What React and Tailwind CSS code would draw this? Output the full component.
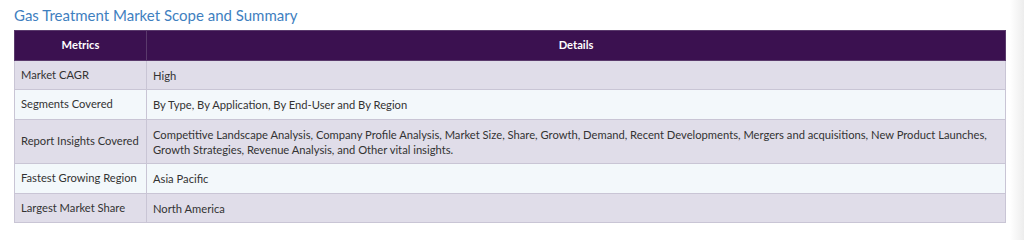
export default function App() {
  const rows = [
    ["Market CAGR", "High", "h-[29px]"],
    ["Segments Covered", "By Type, By Application, By End-User and By Region", "h-[30px]"],
    [
      "Report Insights Covered",
      "Competitive Landscape Analysis, Company Profile Analysis, Market Size, Share, Growth, Demand, Recent Developments, Mergers and acquisitions, New Product Launches, Growth Strategies, Revenue Analysis, and Other vital insights.",
      "h-[44px]",
    ],
    ["Fastest Growing Region", "Asia Pacific", "h-[30px]"],
    ["Largest Market Share", "North America", "h-[29px]"],
  ];
  return (
    <div className="w-[1024px] h-[240px] bg-white relative overflow-hidden" style={{ fontFamily: "Lato, 'Open Sans', sans-serif" }}>
      <div className="pl-[14px] pr-[18px] pt-[5px]">
        <h2 className="text-[15px] leading-[20px] text-[#3f7fbf] font-normal mb-[5px]">
          Gas Treatment Market Scope and Summary
        </h2>
        <table className="w-[992px] border-collapse text-[11.2px] text-[#333333]">
          <thead>
            <tr className="bg-[#3b1150] h-[30px]">
              <th className="w-[132px] border border-[#5a3a6c] text-white font-bold text-center">Metrics</th>
              <th className="border border-[#5a3a6c] text-white font-bold text-center">Details</th>
            </tr>
          </thead>
          <tbody>
            {rows.map((r, i) => (
              <tr key={i} className={i % 2 === 0 ? "bg-[#e0dde9]" : "bg-[#f3f8fb]"}>
                <td className={"border border-[#c9c5d5] px-[6px] align-middle " + r[2]}>{r[0]}</td>
                <td className="border border-[#c9c5d5] px-[6px] leading-[15px] align-middle">{r[1]}</td>
              </tr>
            ))}
          </tbody>
        </table>
      </div>
      <div className="absolute right-0 top-0 h-full w-[14px] bg-gradient-to-r from-white to-[#ededed]" />
    </div>
  );
}
